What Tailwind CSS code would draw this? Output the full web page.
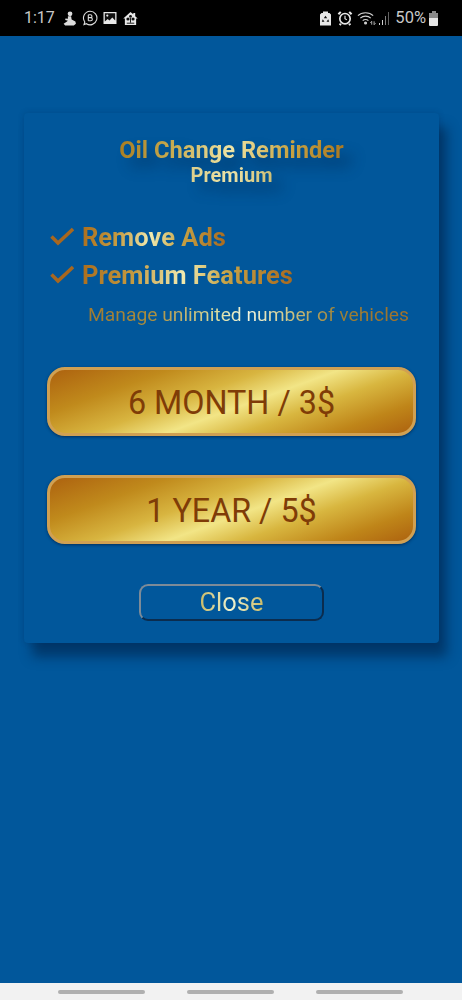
<!DOCTYPE html>
<html>
<head>
<meta charset="utf-8">
<script src="https://cdn.jsdelivr.net/npm/@tailwindcss/browser@4"></script>
</head>
<body class="m-0">
<div class="w-[462px] h-[1000px] flex flex-col overflow-hidden bg-[#01579b] font-['Roboto',sans-serif]">
  <!-- status bar -->
  <div class="h-[36px] bg-black flex items-center justify-between pl-[24px] pr-[24px] text-[#c8c8c8] shrink-0">
    <div class="flex items-center">
      <span class="text-[16px] w-[37px] leading-none">1:17</span>
      <div class="ml-[1px] flex items-center gap-[5px]">
        <svg width="15" height="15" viewBox="0 0 14 14" fill="#dcdcdc"><circle cx="7.500" cy="2.600" r="2.200"/><path d="M5.500 5 8.500 5 9 8 12.500 9.800 13 12 11 13.500 3 13.500 1.500 12 4 10.300 5.500 9 3 8.300 3.200 7 5.500 7.300Z"/></svg>
        <svg width="16" height="16" viewBox="0 0 16 16" fill="none" stroke="#dcdcdc" stroke-width="1.100"><path d="M8 1.200a6.800 6.800 0 1 1-3.600 12.500L2 14.600l.8-2.600A6.800 6.800 0 0 1 8 1.200Z"/><path d="M6.300 4.700v6M6.300 4.700h2.200a1.400 1.400 0 0 1 0 2.900H6.300M6.300 7.600h2.500a1.550 1.550 0 0 1 0 3.100H6.300"/></svg>
        <svg width="14" height="14" viewBox="0 0 14 14"><path fill="#e8e8e8" d="M.5 1h13v12H.5Z"/><path fill="#111" d="M1.800 2.300h10.400v7.200L9.300 6.500 6.500 9.500 4.700 8 1.800 10.400Z"/><circle cx="4.300" cy="4.600" r="1.100" fill="#e8e8e8"/></svg>
        <svg width="15" height="15" viewBox="0 0 16 15" class="ml-[1px]"><path fill="#e8e8e8" d="M8 .5 11 3V1.500h2V5l2.700 2.500H14v7H2v-7H.3Z"/><circle cx="5.300" cy="8" r="1.700" fill="#111"/><circle cx="10.700" cy="8" r="1.700" fill="#111"/><circle cx="8" cy="5.300" r="1.500" fill="#111"/><path stroke="#111" stroke-width="1" d="M8 7v5M4 12.500h8"/></svg>
      </div>
    </div>
    <div class="flex items-center">
      <svg width="11" height="15" viewBox="0 0 11 15"><path fill="#e8e8e8" d="M3 .5h5v1.500h1.500L11 3.500v11H0v-11L1.500 2H3Z"/><path fill="#111" d="M5.500 4.800 7.200 7.300H3.800ZM2.800 8.300 1.800 10.800H4.500ZM8.200 8.300 9.200 10.800H6.500Z"/></svg>
      <svg class="ml-[6px]" width="16" height="16" viewBox="0 0 17 16" fill="none" stroke="#e8e8e8"><circle cx="8.500" cy="8.700" r="5.500" stroke-width="1.800"/><path stroke-width="1.200" d="M8.500 5.500v3.300l2 1.200"/><path stroke-width="2.200" d="M1.500 4 4 1.500M15.500 4 13 1.500M4 14l-1 1.500M13 14l1 1.500"/></svg>
      <svg class="ml-[4px]" width="19" height="15" viewBox="0 0 20 15" fill="none" stroke="#d0d0d0" stroke-width="1.200"><path d="M1 4.500C5 .5 13 .5 17 4.500M3.500 7.200C6.500 4.200 11.500 4.200 14.500 7.200M6 9.800c1.600-1.500 4.400-1.500 6 0"/><circle cx="9" cy="12.300" r="1" fill="#d0d0d0"/><path d="M15.500 14v-3.500M14 12l1.500-1.500M18 10.500V14M19.500 12.500 18 14" stroke-width=".9"/></svg>
      <div class="ml-[3px] flex items-end gap-[1.500px] h-[14px]">
        <i class="block w-[1.500px] h-[2px] bg-[#cfcfcf]"></i><i class="block w-[1.500px] h-[5px] bg-[#cfcfcf]"></i><i class="block w-[1.500px] h-[9px] bg-[#808080]"></i><i class="block w-[1.500px] h-[13px] bg-[#606060]"></i>
      </div>
      <span class="ml-[6px] text-[16.500px] leading-none">50%</span>
      <div class="ml-[3px] relative w-[9px] h-[13px] bg-[#e6e6e6] rounded-[1px] mt-[2px]">
        <div class="absolute -top-[2px] left-[2.500px] w-[4px] h-[2px] bg-[#8a8a8a]"></div>
        <div class="absolute top-0 left-0 w-full h-[5px] bg-[#8a8a8a] rounded-t-[1px]"></div>
      </div>
    </div>
  </div>

  <!-- main -->
  <div class="flex-1 pt-[77px] pl-[24px] bg-[#01579b]">
    <div class="w-[415px] h-[530px] bg-[#01579b] rounded-[4px] shadow-[8px_14px_12px_rgba(0,25,60,0.5),0_0_6px_rgba(0,30,70,0.2)] flex flex-col">
      <div class="flex flex-col items-center pt-[23px] drop-shadow-[10px_10px_7px_rgba(0,25,60,0.45)]">
        <div class="text-[23.700px] leading-[28px] font-bold bg-clip-text text-transparent bg-[linear-gradient(100deg,#a87c20_0%,#c9ad52_25%,#efe5a6_50%,#c9a544_75%,#a9761f_100%)]">Oil Change Reminder</div>
        <div class="text-[20px] leading-[22px] font-bold bg-clip-text text-transparent bg-[linear-gradient(100deg,#dccf8a,#ece3a8,#cdbd72)]">Premium</div>
      </div>
      <div class="mt-[31px] pl-[26px] flex items-center gap-[8px] h-[38px]">
        <svg width="24" height="20" viewBox="0 0 24 20" fill="none" stroke="#a8671f" stroke-width="3.500"><path d="M1.500 10.500 8 17 23 3"/></svg>
        <div class="text-[25.500px] leading-[30px] font-bold pt-[1px] bg-clip-text text-transparent bg-[linear-gradient(100deg,#aa6c1c_0%,#c49a40_25%,#f1ebb0_48%,#c6a346_68%,#a8681d_100%)]">Remove Ads</div>
      </div>
      <div class="pl-[26px] flex items-center gap-[8px] h-[38px]">
        <svg width="24" height="20" viewBox="0 0 24 20" fill="none" stroke="#a8671f" stroke-width="3.500"><path d="M1.500 10.500 8 17 23 3"/></svg>
        <div class="text-[25.500px] leading-[30px] font-bold pt-[1px] bg-clip-text text-transparent bg-[linear-gradient(100deg,#aa6c1c_0%,#c49a40_25%,#f1ebb0_48%,#c6a346_68%,#a8681d_100%)]">Premium Features</div>
      </div>
      <div class="mt-[2px] pl-[64px] h-[39px] flex items-center">
        <div class="text-[19.250px] leading-[24px] bg-clip-text text-transparent bg-[linear-gradient(90deg,#a07a30_0%,#a88d40_20%,#d8dca0_40%,#f2f6e0_50%,#cfc88a_62%,#9a8038_78%,#a0702a_100%)]">Manage unlimited number of vehicles</div>
      </div>
      <div class="mt-[33px] ml-[23px] w-[369px] flex flex-col gap-[39px]">
        <div class="h-[69px] pt-[3px] rounded-[18px] border-[3px] border-[#d0a052] shadow-[0_1px_3px_rgba(0,20,50,0.6)] flex items-center justify-center text-[32.300px] text-[#7f3c07] bg-[linear-gradient(160deg,#ad620f_0%,#c08a1c_22%,#d8b540_40%,#f2e586_54%,#d8b63f_68%,#bf8519_85%,#ad620f_100%)]">6 MONTH / 3$</div>
        <div class="h-[69px] pt-[3px] rounded-[18px] border-[3px] border-[#d0a052] shadow-[0_1px_3px_rgba(0,20,50,0.6)] flex items-center justify-center text-[32.300px] text-[#7f3c07] bg-[linear-gradient(160deg,#ad620f_0%,#c08a1c_22%,#d8b540_40%,#f2e586_54%,#d8b63f_68%,#bf8519_85%,#ad620f_100%)]">1 YEAR / 5$</div>
      </div>
      <div class="mt-[40px] ml-[115px] w-[185px] h-[37px] rounded-[9px] border-2 border-t-[#7d8b98] border-l-[#7d8b98] border-r-[#0b2c4e] border-b-[#0b2c4e] flex items-center justify-center">
        <span class="text-[25.500px] leading-none bg-clip-text text-transparent bg-[linear-gradient(90deg,#c9b964,#eef3d2,#c9b964)]">Close</span>
      </div>
    </div>
  </div>

  <!-- nav bar -->
  <div class="h-[17px] bg-[#f2f2f2] shrink-0 relative flex items-center pl-[58px] gap-[42px]">
    <div class="w-[87px] h-[4px] rounded-full bg-[#b0b0b0]"></div>
    <div class="w-[87px] h-[4px] rounded-full bg-[#b0b0b0]"></div>
    <div class="w-[87px] h-[4px] rounded-full bg-[#b0b0b0]"></div>
  </div>
</div>
</body>
</html>
